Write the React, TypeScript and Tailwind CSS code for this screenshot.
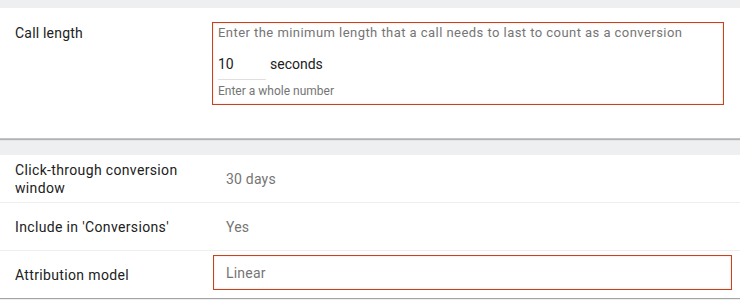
const font = { fontFamily: 'Roboto, "Liberation Sans", sans-serif' };

const Row = ({
  label,
  children,
  last,
}: {
  label: string;
  children: React.ReactNode;
  last?: boolean;
}) => (
  <div
    className={`flex items-center h-[48px] ${
      last ? 'border-b border-[#a3a3a3]' : 'border-b border-[#eeeeee]'
    }`}
  >
    <div className="w-[213px] shrink-0 pl-[15px] pr-[12px] text-[14px] leading-[18px] tracking-[0.35px] text-[#212121]">
      {label}
    </div>
    {children}
  </div>
);

const App = () => {
  return (
    <div
      className="w-[740px] h-[300px] overflow-hidden bg-[#eeeff1] pt-[8px]"
      style={font}
    >
      <div className="bg-white h-[131px] flex shadow-[0_1px_1px_rgba(0,0,0,0.25)] border-b border-[#c4c4c4]">
        <div className="w-[212px] shrink-0 pl-[15px] mt-[15px] text-[14px] leading-[20px] tracking-[0.2px] text-[#212121]">
          Call length
        </div>
        <div className="mt-[14px] w-[512px] h-[83px] border border-[#c8421d] shadow-[inset_0_0_2px_rgba(200,66,29,0.25)] pl-[5px]">
          <div className="mt-[2px] text-[13px] leading-[16px] tracking-[0.45px] text-[#757575]">
            Enter the minimum length that a call needs to last to count as a
            conversion
          </div>
          <div className="mt-[13px] flex items-start text-[14px] leading-[20px] text-[#212121]">
            <div className="w-[48px] pb-[5px] border-b border-[#e0e0e0]">10</div>
            <div className="ml-[4px]">seconds</div>
          </div>
          <div className="mt-[3px] text-[12px] leading-[16px] text-[#757575]">
            Enter a whole number
          </div>
        </div>
      </div>

      <div className="mt-[16px] bg-white">
        <Row label="Click-through conversion window">
          <div className="pl-[13px] text-[14px] leading-[20px] tracking-[0.2px] text-[#757575]">
            30 days
          </div>
        </Row>
        <Row label="Include in 'Conversions'">
          <div className="pl-[13px] text-[14px] leading-[20px] tracking-[0.2px] text-[#757575]">
            Yes
          </div>
        </Row>
        <Row label="Attribution model" last>
          <div className="self-start mt-[4px] w-[519px] h-[35px] border border-[#c8421d] shadow-[inset_0_0_2px_rgba(200,66,29,0.25)] pl-[12px] pt-[7px] text-[14px] leading-[20px] tracking-[0.2px] text-[#757575]">
            Linear
          </div>
        </Row>
      </div>
    </div>
  );
};

export default App;
